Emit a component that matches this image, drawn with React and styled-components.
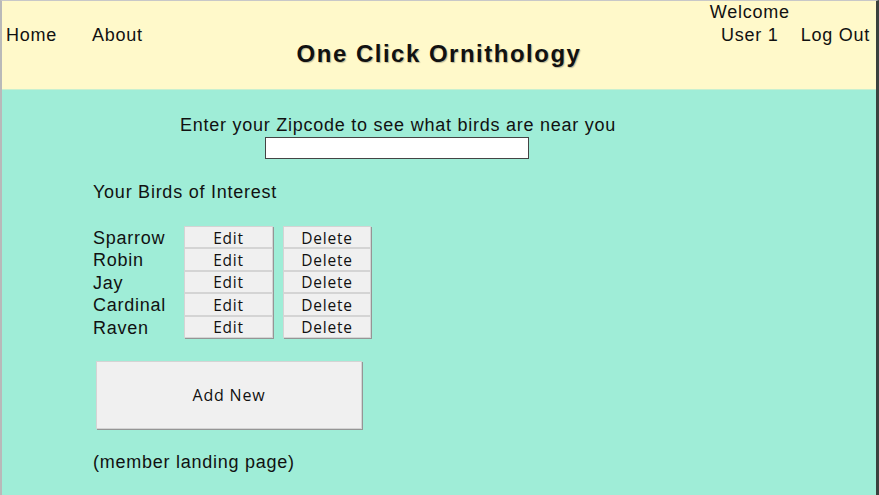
import React from "react";
import styled, { createGlobalStyle } from "styled-components";

const GlobalStyle = createGlobalStyle`
  html, body { margin: 0; padding: 0; background: #9fedd7; }
  body { font-family: "Liberation Sans", Arial, sans-serif; color: #111; }
  * { box-sizing: border-box; }
`;

const Frame = styled.div`
  width: 879px;
  height: 495px;
  display: flex;
  flex-direction: column;
  border-left: 2px solid #b9b9b9;
  border-top: 1px solid #c8c8c8;
  border-right: 3px solid #3a403d;
  overflow: hidden;
`;

const Header = styled.header`
  height: 89px;
  background: #fff9ca;
  display: grid;
  grid-template-columns: 1fr auto 1fr;
  font-size: 18px;
  letter-spacing: 0.75px;
  line-height: 23px;
  border-bottom: 1px solid #c8f0cf;
`;

const Nav = styled.nav`
  display: flex;
  gap: 35px;
  padding: 23px 0 0 4px;
`;

const NavLink = styled.span`
  cursor: pointer;
`;

const Title = styled.h1`
  margin: 0;
  padding-top: 39px;
  font-size: 24px;
  line-height: 28px;
  font-weight: bold;
  letter-spacing: 1.5px;
  text-shadow: 1px 1px 1px rgba(0, 0, 0, 0.25);
`;

const UserArea = styled.div`
  display: flex;
  justify-content: flex-end;
  gap: 11px;
  padding-right: 6px;
`;

const Welcome = styled.div`
  text-align: center;
`;

const LogOut = styled.span`
  padding-top: 23px;
  cursor: pointer;
`;

const Main = styled.main`
  flex: 1;
  background: #9fedd7;
  display: flex;
  flex-direction: column;
  gap: 23px;
  padding: 25px 0 0 91px;
  font-size: 18px;
  letter-spacing: 0.75px;
  line-height: 21px;
`;

const ZipBlock = styled.div`
  width: 480px;
  margin-left: 65px;
  display: flex;
  flex-direction: column;
  align-items: center;
`;

const ZipInput = styled.input`
  width: 264px;
  height: 22px;
  margin: 1px 0 0 -3px;
  border: 1px solid #444;
  background: #fff;
  padding: 0 4px;
  outline: none;
`;

const Heading = styled.div``;

const BirdList = styled.div`
  display: grid;
  grid-template-columns: 81px 89px 88px;
  column-gap: 10px;
  grid-auto-rows: 22.4px;
  align-items: stretch;
`;

const BirdName = styled.span`
  line-height: 22.4px;
  padding-top: 1px;
  white-space: nowrap;
`;

const Button = styled.button`
  font-family: "Open Sans", "Segoe UI", sans-serif;
  font-size: ${(p) => (p.$big ? "16px" : "15.5px")};
  letter-spacing: 0.8px;
  color: #111;
  background: #f0f0f0;
  border: 1px solid #d4d4d4;
  box-shadow: 1px 1px 0 #959595;
  padding: ${(p) => (p.$big ? "0" : "1px 0 0")};
  margin: 0;
  width: ${(p) => (p.$big ? "266px" : "auto")};
  height: ${(p) => (p.$big ? "68px" : "auto")};
  margin-left: ${(p) => (p.$big ? "3px" : "0")};
  display: flex;
  align-items: center;
  justify-content: center;
  cursor: pointer;
`;

const Note = styled.div``;

const birds = ["Sparrow", "Robin", "Jay", "Cardinal", "Raven"];

export default function App() {
  return (
    <>
      <GlobalStyle />
      <Frame>
        <Header>
          <Nav>
            <NavLink>Home</NavLink>
            <NavLink>About</NavLink>
          </Nav>
          <Title>One Click Ornithology</Title>
          <UserArea>
            <Welcome>
              Welcome
              <br />
              User 1
            </Welcome>
            <LogOut>Log Out</LogOut>
          </UserArea>
        </Header>
        <Main>
          <ZipBlock>
            <span>Enter your Zipcode to see what birds are near you</span>
            <ZipInput type="text" />
          </ZipBlock>
          <Heading>Your Birds of Interest</Heading>
          <BirdList>
            {birds.map((b) => (
              <React.Fragment key={b}>
                <BirdName>{b}</BirdName>
                <Button>Edit</Button>
                <Button>Delete</Button>
              </React.Fragment>
            ))}
          </BirdList>
          <Button $big>Add New</Button>
          <Note>(member landing page)</Note>
        </Main>
      </Frame>
    </>
  );
}
